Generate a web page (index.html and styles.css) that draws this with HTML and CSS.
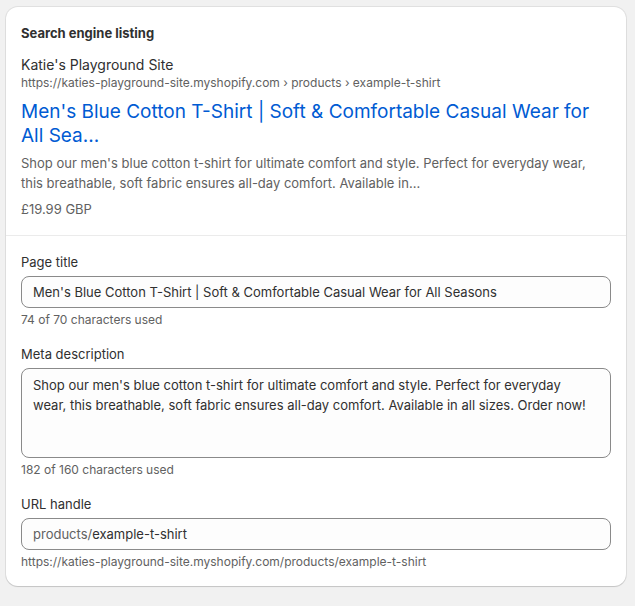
FILE: index.html
```html
<!DOCTYPE html>
<html lang="en">
<head>
    <meta charset="UTF-8">
    <meta name="viewport" content="width=device-width, initial-scale=1.0">
    <title>Search engine listing</title>
    <link rel="stylesheet" href="styles.css">
</head>
<body>
    <div class="card">
        <div class="preview">
            <h2 class="card-title">Search engine listing</h2>
            <div class="site-name">Katie's Playground Site</div>
            <div class="site-url">https://katies-playground-site.myshopify.com › products › example-t-shirt</div>
            <a class="result-title" href="#">Men's Blue Cotton T-Shirt | Soft &amp; Comfortable Casual Wear for All Sea...</a>
            <p class="result-desc">Shop our men's blue cotton t-shirt for ultimate comfort and style. Perfect for everyday wear, this breathable, soft fabric ensures all-day comfort. Available in...</p>
            <div class="result-price">£19.99 GBP</div>
        </div>

        <div class="fields">
            <div class="field">
                <label class="label" for="pageTitle">Page title</label>
                <input class="input" id="pageTitle" type="text" value="Men's Blue Cotton T-Shirt | Soft &amp; Comfortable Casual Wear for All Seasons">
                <div class="help">74 of 70 characters used</div>
            </div>

            <div class="field">
                <label class="label" for="metaDesc">Meta description</label>
                <textarea class="input textarea" id="metaDesc">Shop our men's blue cotton t-shirt for ultimate comfort and style. Perfect for everyday wear, this breathable, soft fabric ensures all-day comfort. Available in all sizes. Order now!</textarea>
                <div class="help">182 of 160 characters used</div>
            </div>

            <div class="field">
                <label class="label" for="urlHandle">URL handle</label>
                <div class="input prefixed">
                    <span class="prefix">products/</span>
                    <input id="urlHandle" type="text" value="example-t-shirt">
                </div>
                <div class="help">https://katies-playground-site.myshopify.com/products/example-t-shirt</div>
            </div>
        </div>
    </div>
</body>
</html>
```

FILE: styles.css
```css
* {
    box-sizing: border-box;
}

body {
    margin: 0;
    padding: 7px 9px 20px 6px;
    background: #f1f1f1;
    font-family: Inter, "Noto Sans", Arial, sans-serif;
    color: #303030;
    font-size: 13px;
    line-height: 20px;
}

.card {
    background: #fff;
    border-radius: 12px;
    box-shadow: 0 0 0 1px rgba(0, 0, 0, 0.07), 0 1px 1px rgba(0, 0, 0, 0.12);
}

.preview {
    padding: 16px 15px 16px 15px;
    border-bottom: 1px solid #ebebeb;
}

.card-title {
    margin: 0 0 12px;
    font-size: 13px;
    font-weight: 650;
    line-height: 20px;
}

.site-name {
    font-size: 14px;
    line-height: 20px;
    color: #303030;
}

.site-url {
    font-size: 12px;
    line-height: 16px;
    color: #616161;
}

.result-title {
    display: block;
    margin-top: 9px;
    font-size: 19px;
    line-height: 24px;
    color: #005bd3;
    text-decoration: none;
}

.result-desc {
    margin: 5px 0 0;
    color: #616161;
}

.result-price {
    margin-top: 6px;
    color: #616161;
}

.fields {
    padding: 16px 15px 16px 15px;
    display: flex;
    flex-direction: column;
    gap: 16px;
}

.field {
    display: flex;
    flex-direction: column;
}

.label {
    margin-bottom: 4px;
}

.input {
    width: 100%;
    height: 32px;
    padding: 0 11px;
    border: 1px solid #8a8a8a;
    border-radius: 8px;
    background: #fdfdfd;
    font: inherit;
    color: #303030;
}

.textarea {
    height: 90px;
    padding: 6px 16px 6px 11px;
    resize: none;
    line-height: 20px;
}

.prefixed {
    display: flex;
    align-items: center;
}

.prefix {
    color: #616161;
}

.prefixed input {
    flex: 1;
    border: none;
    background: transparent;
    padding: 0;
    font: inherit;
    color: #303030;
    outline: none;
}

.help {
    margin-top: 4px;
    font-size: 12px;
    line-height: 16px;
    color: #616161;
}
```
